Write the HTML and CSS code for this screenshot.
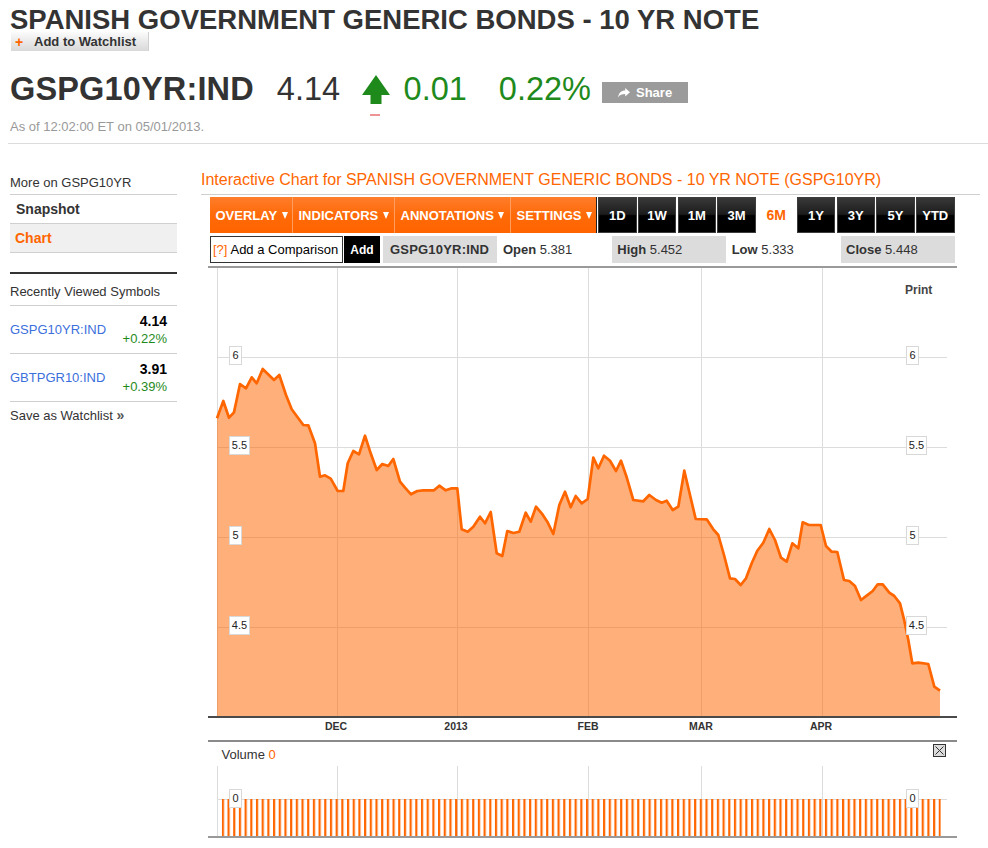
FILE: index.html
```html
<!DOCTYPE html>
<html>
<head>
<meta charset="utf-8">
<title>GSPG10YR:IND Interactive Chart</title>
<link rel="stylesheet" href="styles.css">
</head>
<body>
<div class="page">
  <h1 class="title">SPANISH GOVERNMENT GENERIC BONDS - 10 YR NOTE</h1>
  <div class="watch"><span class="plus">+</span>Add to Watchlist</div>

  <div class="quote">
    <span class="sym">GSPG10YR:IND</span>
    <span class="price">4.14</span>
    <svg class="arrow" width="28" height="41" viewBox="0 0 28 41">
      <polygon points="14,0 28,20 19.5,20 19.5,29 8.5,29 8.5,20 0,20" fill="#1f8a1c"/>
      <rect x="8" y="39.5" width="10" height="1" fill="#e02a2a"/>
    </svg>
    <span class="chg">0.01</span>
    <span class="pct">0.22%</span>
    <span class="share">
      <svg class="share-ic" width="12" height="10" viewBox="0 0 12 10"><path d="M12 4.2 L7.2 0 L7.2 2.4 C3.2 2.4 0.6 4.8 0 9.4 C1.6 6.9 3.9 6 7.2 6 L7.2 8.4 Z" fill="#fff"/></svg>
      Share
    </span>
  </div>
  <div class="asof">As of 12:02:00 ET on 05/01/2013.</div>
  <div class="sep"></div>

  <div class="content">
    <aside class="side">
      <div class="side-head">More on GSPG10YR</div>
      <div class="nav-item">Snapshot</div>
      <div class="nav-item active">Chart</div>

      <div class="rv-head">Recently Viewed Symbols</div>
      <div class="rv-row">
        <span class="rv-sym">GSPG10YR:IND</span>
        <span class="rv-vals"><span class="rv-price">4.14</span><span class="rv-chg">+0.22%</span></span>
      </div>
      <div class="rv-row">
        <span class="rv-sym">GBTPGR10:IND</span>
        <span class="rv-vals"><span class="rv-price">3.91</span><span class="rv-chg">+0.39%</span></span>
      </div>
      <div class="save">Save as Watchlist <span class="raquo">»</span></div>
    </aside>

    <main class="main">
      <div class="chart-title">Interactive Chart for SPANISH GOVERNMENT GENERIC BONDS - 10 YR NOTE (GSPG10YR)</div>

      <div class="toolbar">
        <div class="menu">
          <div class="menu-item w1">OVERLAY<span class="tri"></span></div>
          <div class="menu-item w2">INDICATORS<span class="tri"></span></div>
          <div class="menu-item w3">ANNOTATIONS<span class="tri"></span></div>
          <div class="menu-item w4">SETTINGS<span class="tri"></span></div>
        </div>
        <div class="periods">
          <div class="pbtn">1D</div>
          <div class="pbtn">1W</div>
          <div class="pbtn">1M</div>
          <div class="pbtn">3M</div>
          <div class="pbtn on">6M</div>
          <div class="pbtn">1Y</div>
          <div class="pbtn">3Y</div>
          <div class="pbtn">5Y</div>
          <div class="pbtn">YTD</div>
        </div>
      </div>

      <div class="row2">
        <div class="compare"><span class="help">[?]</span>Add a Comparison</div>
        <div class="add">Add</div>
        <div class="cells">
          <div class="cell g symcell">GSPG10YR:IND</div>
          <div class="cell"><b>Open</b>&nbsp;5.381</div>
          <div class="cell g"><b>High</b>&nbsp;5.452</div>
          <div class="cell"><b>Low</b>&nbsp;5.333</div>
          <div class="cell g"><b>Close</b>&nbsp;5.448</div>
        </div>
      </div>

      <svg class="chart" width="750" height="575" viewBox="208 265 750 575">
        <defs>
          <pattern id="vbars" patternUnits="userSpaceOnUse" x="221.8" y="0" width="5.69" height="100">
            <rect x="0" y="0" width="2.2" height="100" fill="#ff6600"/>
          </pattern>
        </defs>
        <rect x="208" y="266" width="749" height="2" fill="#9a9a9a"/>
        <g class="grid">
          <line x1="217.5" y1="268" x2="217.5" y2="716"/>
          <line x1="337.5" y1="268" x2="337.5" y2="716"/>
          <line x1="457.5" y1="268" x2="457.5" y2="716"/>
          <line x1="588.5" y1="268" x2="588.5" y2="716"/>
          <line x1="701.5" y1="268" x2="701.5" y2="716"/>
          <line x1="822.5" y1="268" x2="822.5" y2="716"/>
          <line x1="217" y1="357.5" x2="947" y2="357.5"/>
          <line x1="217" y1="447.5" x2="947" y2="447.5"/>
          <line x1="217" y1="537.5" x2="947" y2="537.5"/>
          <line x1="217" y1="627.5" x2="947" y2="627.5"/>
        </g>
        <polygon class="area" points="217,418.3 223.3,401 229,417.7 234,412.3 240,384 246,388.3 251.7,377.3 256.7,383.3 262.7,369 274,380 279.3,375 286,395 291.7,409.3 303.3,425 308.3,425.3 315,443.3 320,476.7 325,475.3 330.7,478.7 337.7,491 343.3,491 347.7,463.3 353.3,451 359,454.3 365,435.7 370.7,453.3 376.7,470 382.3,464 388.3,466 393.3,459 400,481.7 405,487.7 411,494.3 417.3,491 423.3,490.3 434,490.3 439.3,485.7 445.7,490.3 451.7,488.3 457.3,488.3 461.7,529.3 467.7,531.7 473.3,526.7 480,516.7 485,523.3 490.7,512 496.7,553.3 502.3,556 507.3,531 513.3,533 519.3,531.7 525.7,512.7 530.7,521.7 536,506.7 541.7,513.3 547.3,521.7 553.3,534 559.3,505 565,491.7 570.7,507.3 575.7,496 581.7,503.3 587.7,499 593.3,457.7 598.3,468.3 604,455.7 610,460.7 616,471 621,460.7 626.7,477.3 633.3,500 643.3,501.3 649.3,495 656,500 661.7,502.7 666.7,500.7 672.7,510 678.3,506.7 684.3,470.7 690,495 695.7,519 706.7,519.3 713.3,529.3 718.3,535 724,555 730,578.3 735,579 740.7,585 746,578.3 751.7,563.3 757.3,550.7 763.3,542.7 769.3,529 775,540 781,557.7 786.7,561.7 792.3,543.3 798.3,548.3 802.7,522.3 809,525 820.7,525 826,546 831.7,551.7 837.3,552 844,580 849.3,581 855,586 861,600 866.7,595.7 872.7,591 877.7,584.3 882.7,584.3 889.3,592.7 894.3,596 900,603.3 904,619.3 908.3,640 912.3,663.3 918.3,662.7 928.3,664 934.3,686.7 940,690.7 940,716 217,716"/>
        <polyline class="line" points="217,418.3 223.3,401 229,417.7 234,412.3 240,384 246,388.3 251.7,377.3 256.7,383.3 262.7,369 274,380 279.3,375 286,395 291.7,409.3 303.3,425 308.3,425.3 315,443.3 320,476.7 325,475.3 330.7,478.7 337.7,491 343.3,491 347.7,463.3 353.3,451 359,454.3 365,435.7 370.7,453.3 376.7,470 382.3,464 388.3,466 393.3,459 400,481.7 405,487.7 411,494.3 417.3,491 423.3,490.3 434,490.3 439.3,485.7 445.7,490.3 451.7,488.3 457.3,488.3 461.7,529.3 467.7,531.7 473.3,526.7 480,516.7 485,523.3 490.7,512 496.7,553.3 502.3,556 507.3,531 513.3,533 519.3,531.7 525.7,512.7 530.7,521.7 536,506.7 541.7,513.3 547.3,521.7 553.3,534 559.3,505 565,491.7 570.7,507.3 575.7,496 581.7,503.3 587.7,499 593.3,457.7 598.3,468.3 604,455.7 610,460.7 616,471 621,460.7 626.7,477.3 633.3,500 643.3,501.3 649.3,495 656,500 661.7,502.7 666.7,500.7 672.7,510 678.3,506.7 684.3,470.7 690,495 695.7,519 706.7,519.3 713.3,529.3 718.3,535 724,555 730,578.3 735,579 740.7,585 746,578.3 751.7,563.3 757.3,550.7 763.3,542.7 769.3,529 775,540 781,557.7 786.7,561.7 792.3,543.3 798.3,548.3 802.7,522.3 809,525 820.7,525 826,546 831.7,551.7 837.3,552 844,580 849.3,581 855,586 861,600 866.7,595.7 872.7,591 877.7,584.3 882.7,584.3 889.3,592.7 894.3,596 900,603.3 904,619.3 908.3,640 912.3,663.3 918.3,662.7 928.3,664 934.3,686.7 940,690.7"/>

        <g class="lbl">
          <rect x="229.5" y="346.5" width="12" height="18"/><text x="235.5" y="359">6</text>
          <rect x="229.5" y="436.5" width="20" height="18"/><text x="239.5" y="449">5.5</text>
          <rect x="229.5" y="526.5" width="12" height="18"/><text x="235.5" y="539">5</text>
          <rect x="229.5" y="616.5" width="20" height="18"/><text x="239.5" y="629">4.5</text>
          <rect x="906.5" y="346.5" width="12" height="18"/><text x="912.5" y="359">6</text>
          <rect x="906.5" y="436.5" width="20" height="18"/><text x="916.5" y="449">5.5</text>
          <rect x="906.5" y="526.5" width="12" height="18"/><text x="912.5" y="539">5</text>
          <rect x="906.5" y="616.5" width="20" height="18"/><text x="916.5" y="629">4.5</text>
        </g>
        <text class="print" x="905" y="294">Print</text>

        <rect x="208" y="716" width="749" height="2" fill="#4a4a4a"/>
        <g class="axis">
          <text x="336" y="730">DEC</text>
          <text x="456" y="730">2013</text>
          <text x="588" y="730">FEB</text>
          <text x="701" y="730">MAR</text>
          <text x="821" y="730">APR</text>
        </g>
        <rect x="208" y="740" width="749" height="2" fill="#8a8a8a"/>

        <text class="vol" x="221.5" y="758.5">Volume <tspan class="vol0">0</tspan></text>
        <rect x="933.5" y="744.5" width="12" height="12" fill="#dcdcdc" stroke="#333"/>
        <path d="M935.5 746.5 L943.5 754.5 M943.5 746.5 L935.5 754.5" stroke="#333" stroke-width="1"/>

        <g class="grid">
          <line x1="217.5" y1="766" x2="217.5" y2="836"/>
          <line x1="337.5" y1="766" x2="337.5" y2="836"/>
          <line x1="457.5" y1="766" x2="457.5" y2="836"/>
          <line x1="588.5" y1="766" x2="588.5" y2="836"/>
          <line x1="701.5" y1="766" x2="701.5" y2="836"/>
          <line x1="822.5" y1="766" x2="822.5" y2="836"/>
          <line x1="217" y1="799.5" x2="947" y2="799.5"/>
        </g>
        <rect x="221.8" y="799" width="719" height="37" fill="url(#vbars)"/>
        <g class="lbl">
          <rect x="229.5" y="789.5" width="12" height="18"/><text x="235.5" y="802">0</text>
          <rect x="906.5" y="789.5" width="12" height="18"/><text x="912.5" y="802">0</text>
        </g>
        <rect x="208" y="836" width="749" height="2" fill="#999"/>
      </svg>
    </main>
  </div>
</div>
</body>
</html>
```

FILE: styles.css
```css
html, body {
  margin: 0;
  padding: 0;
  background: #fff;
}

body {
  font-family: "Liberation Sans", Arial, sans-serif;
  color: #333;
}

.page {
  padding-left: 10px;
  width: 978px;
}

/* ---------- header ---------- */
.title {
  margin: 0;
  padding-top: 8px;
  font-size: 27.5px;
  line-height: 24px;
  font-weight: bold;
  color: #333;
  white-space: nowrap;
}

.watch {
  display: flex;
  align-items: center;
  box-sizing: border-box;
  width: 138px;
  height: 19px;
  margin-left: 1px;
  padding-left: 4px;
  background: linear-gradient(#fbfbfb, #e6e6e6 60%, #d9d9d9);
  border-right: 1px solid #d0d0d0;
  font-size: 13px;
  font-weight: bold;
  color: #333;
  white-space: nowrap;
}

.plus {
  width: 19px;
  color: #ff6600;
  font-weight: bold;
  font-size: 14px;
}

.quote {
  display: flex;
  align-items: flex-start;
  height: 45px;
  margin-top: 20px;
  white-space: nowrap;
}

.sym, .price, .chg, .pct {
  font-size: 32.5px;
  line-height: 36px;
}

.sym {
  font-weight: bold;
  color: #333;
  letter-spacing: 0.15px;
}

.price {
  margin-left: 23px;
  color: #333;
}

.arrow {
  display: block;
  margin-top: 4px;
  margin-left: 22px;
}

.chg {
  margin-left: 13.5px;
  color: #1f8a1c;
}

.pct {
  margin-left: 32px;
  color: #1f8a1c;
}

.share {
  display: flex;
  align-items: center;
  box-sizing: border-box;
  width: 86px;
  height: 21px;
  margin-top: 11px;
  margin-left: 11px;
  padding-left: 16px;
  background: #9b9b9b;
  color: #fff;
  font-size: 13px;
  font-weight: bold;
}

.share-ic {
  display: block;
  margin-right: 6px;
}

.asof {
  margin-top: 4px;
  font-size: 13px;
  line-height: 14px;
  color: #999;
}

.sep {
  height: 1px;
  margin: 9px 0 0 -2px;
  width: 980px;
  background: #dcdcdc;
}

/* ---------- layout ---------- */
.content {
  display: flex;
  align-items: flex-start;
}

.side {
  width: 167px;
  margin-top: 32px;
  font-size: 13px;
}

.main {
  width: 779px;
  margin-left: 24px;
  margin-top: 27px;
}

/* ---------- sidebar ---------- */
.side-head {
  line-height: 14px;
  padding-bottom: 4px;
  border-bottom: 1px solid #cfcfcf;
}

.nav-item {
  font-size: 14px;
  font-weight: bold;
  line-height: 28px;
  padding-left: 6px;
  border-bottom: 1px solid #cfcfcf;
  color: #333;
}

.nav-item.active {
  background: #f0f0f0;
  color: #ff6600;
  padding-left: 5px;
}

.rv-head {
  margin-top: 19px;
  border-top: 2px solid #333;
  padding-top: 11px;
  padding-bottom: 6px;
  line-height: 14px;
  border-bottom: 1px solid #cfcfcf;
}

.rv-row {
  display: flex;
  align-items: center;
  justify-content: space-between;
  height: 47px;
  padding-right: 10px;
  border-bottom: 1px solid #cfcfcf;
}

.rv-sym {
  color: #3b6fdc;
}

.rv-vals {
  display: flex;
  flex-direction: column;
  align-items: flex-end;
  line-height: 18px;
}

.rv-price {
  font-size: 14px;
  font-weight: bold;
  color: #000;
}

.rv-chg {
  color: #1f8a1c;
}

.save {
  padding-top: 6px;
  line-height: 14px;
}

.raquo {
  font-weight: bold;
  font-size: 14px;
  color: #555;
}

/* ---------- chart header ---------- */
.chart-title {
  font-size: 16px;
  line-height: 18px;
  padding-bottom: 5px;
  border-bottom: 1px solid #cfcfcf;
  color: #ff6600;
  white-space: nowrap;
}

.toolbar {
  display: flex;
  height: 36px;
  margin: 2px 0 0 9px;
}

.menu {
  display: flex;
  height: 36px;
}

.menu-item {
  display: flex;
  align-items: center;
  box-sizing: border-box;
  padding-left: 5.5px;
  height: 36px;
  background: linear-gradient(#ff7d2b, #ff6a08 50%, #ff6400);
  border-right: 1px solid #ff9d61;
  color: #fff;
  font-size: 13px;
  font-weight: bold;
  white-space: nowrap;
}

.menu-item.w1 { width: 83px; }
.menu-item.w2 { width: 102px; }
.menu-item.w3 { width: 116px; }
.menu-item.w4 { width: 86px; border-right: 1px solid #222; }

.tri {
  display: inline-block;
  width: 0;
  height: 0;
  margin-left: 4.5px;
  border-left: 3.5px solid transparent;
  border-right: 3.5px solid transparent;
  border-top: 7px solid #fff;
}

.periods {
  display: grid;
  grid-template-columns: repeat(9, 38.5px);
  column-gap: 1.25px;
  margin-left: 1px;
}

.pbtn {
  display: flex;
  align-items: center;
  justify-content: center;
  height: 36px;
  box-sizing: border-box;
  background: linear-gradient(#3a3a3a, #1c1c1c 48%, #000 52%, #000);
  box-shadow: inset 0 0 0 1px #3c3c3c;
  color: #fff;
  font-size: 13px;
  font-weight: bold;
}

.pbtn.on {
  background: none;
  box-shadow: none;
  color: #ff6600;
  font-size: 14px;
}

.row2 {
  display: flex;
  height: 27px;
  margin: 3px 0 0 9px;
  font-size: 13px;
  color: #333;
}

.compare {
  display: flex;
  align-items: center;
  box-sizing: border-box;
  width: 133px;
  padding-left: 2px;
  border: 1px solid #333;
  color: #000;
  white-space: nowrap;
}

.help {
  color: #ff6600;
  margin-right: 3px;
}

.add {
  display: flex;
  align-items: center;
  justify-content: center;
  width: 36px;
  margin-left: 1px;
  background: #000;
  color: #fff;
  font-size: 12px;
  font-weight: bold;
}

.cells {
  display: flex;
  margin-left: 3px;
}

.cell {
  display: flex;
  align-items: center;
  box-sizing: border-box;
  width: 114.4px;
  padding-left: 5.5px;
  white-space: nowrap;
}

.cell.g {
  background: #dcdcdc;
}

.symcell {
  padding-left: 7px;
  font-weight: bold;
  letter-spacing: 0.2px;
}

/* ---------- chart ---------- */
.chart {
  display: block;
  margin: 2px 0 0 7px;
  font-family: "Liberation Sans", Arial, sans-serif;
}

.grid line {
  stroke: #dcdcdc;
  stroke-width: 1;
}

.area {
  fill: #ff6600;
  fill-opacity: 0.52;
}

.line {
  fill: none;
  stroke: #ff6600;
  stroke-width: 2.7;
  stroke-linejoin: round;
}

.lbl rect {
  fill: #fff;
  stroke: #d8d8d8;
  stroke-width: 1;
}

.lbl text {
  font-size: 11px;
  fill: #222;
  text-anchor: middle;
}

.print {
  font-size: 12px;
  font-weight: bold;
  fill: #444;
}

.axis text {
  font-size: 10.5px;
  font-weight: bold;
  fill: #333;
  text-anchor: middle;
}

.vol {
  font-size: 13px;
  fill: #333;
}

.vol0 {
  fill: #ff6600;
}
```
